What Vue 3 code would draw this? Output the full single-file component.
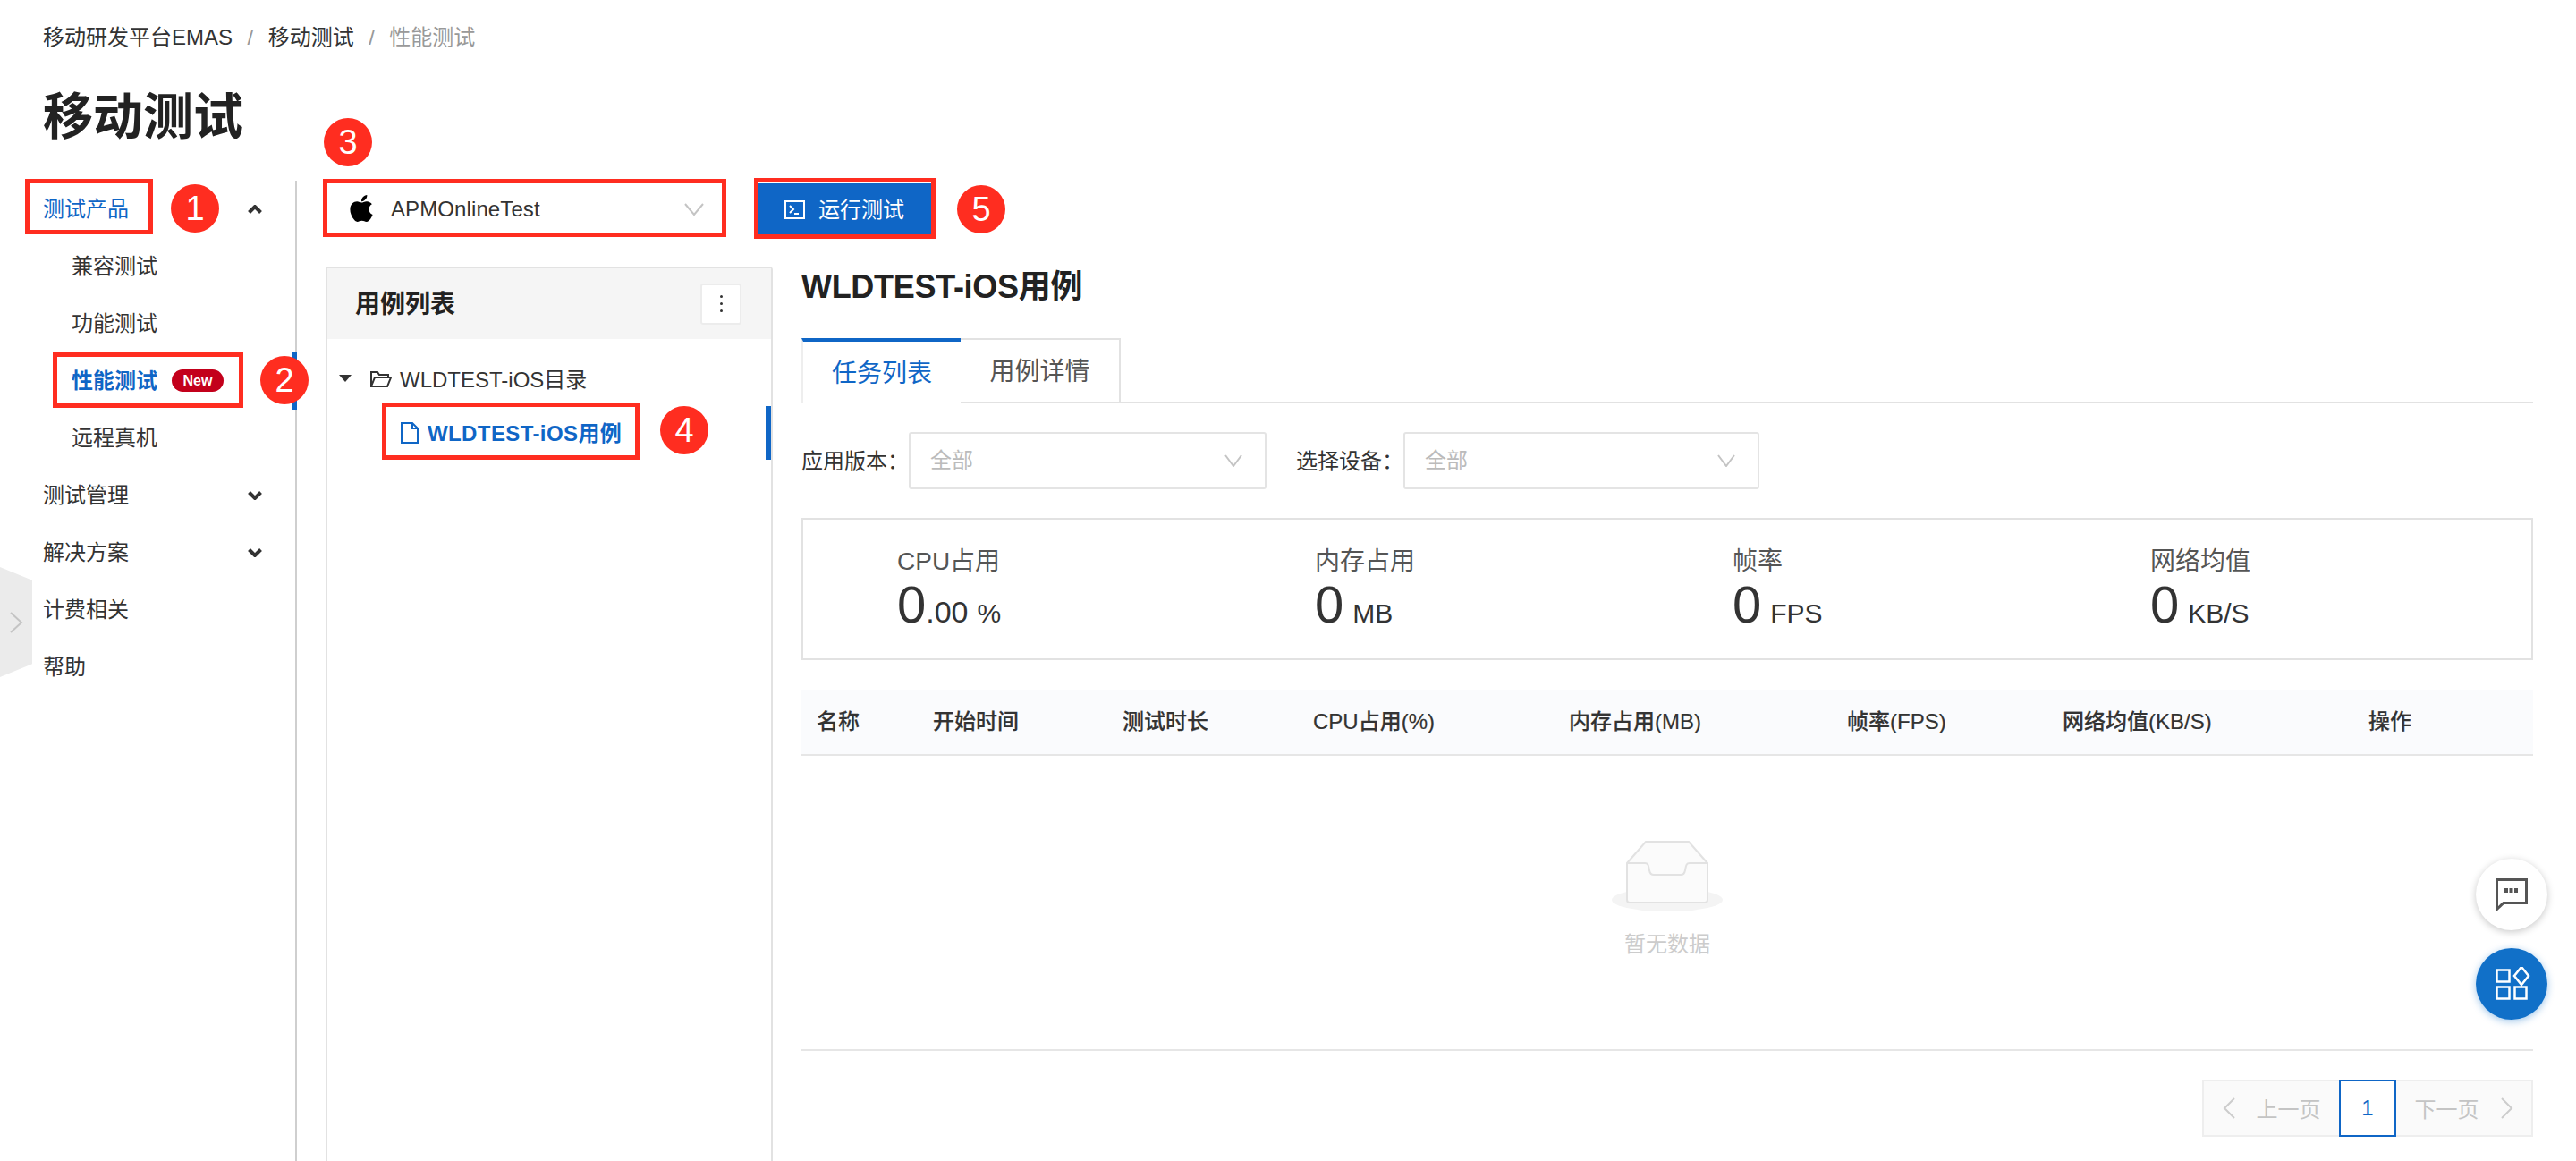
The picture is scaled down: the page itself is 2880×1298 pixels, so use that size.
<script setup>
const subItems = [
  { label: '兼容测试' },
  { label: '功能测试' },
  { label: '性能测试', active: true, badge: 'New' },
  { label: '远程真机' },
]
const lowerItems = [
  { label: '测试管理', arrow: true },
  { label: '解决方案', arrow: true },
  { label: '计费相关' },
  { label: '帮助' },
]
const stats = [
  { title: 'CPU占用', value: '0', frac: '.00', unit: '%' },
  { title: '内存占用', value: '0', unit: 'MB' },
  { title: '帧率', value: '0', unit: 'FPS' },
  { title: '网络均值', value: '0', unit: 'KB/S' },
]
const columns = ['名称', '开始时间', '测试时长', 'CPU占用(%)', '内存占用(MB)', '帧率(FPS)', '网络均值(KB/S)', '操作']
const marks = [1, 2, 3, 4, 5]
const boxes = [1, 2, 3, 4, 5]
</script>

<template>
  <div class="page">
    <header class="head">
      <nav class="crumbs">
        <span>移动研发平台EMAS</span><i>/</i><span>移动测试</span><i>/</i><span class="last">性能测试</span>
      </nav>
      <h1 class="title">移动测试</h1>
    </header>

    <div class="main">
      <aside class="side">
        <div class="row top-active">
          <span>测试产品</span>
          <svg class="caret" width="16" height="10" viewBox="0 0 16 10"><path d="M1.500 8.500 8 2l6.500 6.500" /></svg>
        </div>
        <div v-for="s in subItems" :key="s.label" class="row sub" :class="{ on: s.active }">
          <span>{{ s.label }}</span>
          <em v-if="s.badge" class="badge">{{ s.badge }}</em>
        </div>
        <div v-for="l in lowerItems" :key="l.label" class="row">
          <span>{{ l.label }}</span>
          <svg v-if="l.arrow" class="caret" width="16" height="10" viewBox="0 0 16 10"><path d="M1.500 1.500 8 8l6.500-6.500" /></svg>
        </div>
      </aside>

      <section class="content">
        <div class="toolbar">
          <div class="app-select">
            <svg class="apple" width="28" height="30" viewBox="0 0 384 448"><path transform="translate(0 -32)" d="M318.7 268.7c-.2-36.7 16.4-64.4 50-84.8-18.8-26.9-47.2-41.7-84.7-44.6-35.5-2.8-74.3 20.7-88.5 20.7-15 0-49.4-19.7-76.4-19.7C63.3 141.2 4 184.8 4 273.5q0 39.3 14.4 81.2c12.8 36.7 59 126.7 107.2 125.2 25.2-.6 43-17.9 75.8-17.9 31.8 0 48.3 17.9 76.4 17.9 48.6-.7 90.4-82.5 102.6-119.3-65.2-30.7-61.7-90-61.7-91.9zm-56.6-164.2c27.3-32.4 24.8-61.9 24-72.5-24.1 1.4-52 16.4-67.9 34.9-17.5 19.8-27.8 44.3-25.6 71.9 26.1 2 49.9-11.4 69.5-34.3z" /></svg>
            <span class="app-name">APMOnlineTest</span>
            <svg class="vee" width="22" height="14" viewBox="0 0 22 14"><path d="M1 1l10 12L21 1" /></svg>
          </div>
          <button class="run">
            <svg width="23" height="21" viewBox="0 0 23 21"><path class="term" d="M1 1h21v19H1z" /><path class="term" d="M6 6l4 4-4 4M11 15h5" /></svg>
            <span>运行测试</span>
          </button>
        </div>

        <div class="work">
          <div class="panel">
            <div class="panel-head">
              <strong>用例列表</strong>
              <div class="kebab"><b></b><b></b><b></b></div>
            </div>
            <div class="tree">
              <div class="node">
                <span class="tri"></span>
                <svg width="24" height="18" viewBox="0 0 24 18"><path class="folder" d="M1 17V1h7l2 3h10v3M1 17h18l4-10H5L1 17z" /></svg>
                <span>WLDTEST-iOS目录</span>
              </div>
              <div class="leaf">
                <svg width="20" height="24" viewBox="0 0 20 24"><path class="doc" d="M1 1h12l6 6v16H1zM13 1v6h6" /></svg>
                <span>WLDTEST-iOS用例</span>
              </div>
            </div>
          </div>

          <div class="detail">
            <h2 class="case-title">WLDTEST-iOS用例</h2>
            <div class="tabs">
              <div class="tab active">任务列表</div>
              <div class="tab">用例详情</div>
            </div>
            <div class="filters">
              <label>应用版本：</label>
              <div class="select">
                <span>全部</span>
                <svg class="vee" width="20" height="14" viewBox="0 0 20 14"><path d="M1 1l9 12 9-12" /></svg>
              </div>
              <label class="second">选择设备：</label>
              <div class="select wide">
                <span>全部</span>
                <svg class="vee" width="20" height="14" viewBox="0 0 20 14"><path d="M1 1l9 12 9-12" /></svg>
              </div>
            </div>
            <div class="stats">
              <div v-for="s in stats" :key="s.title" class="stat">
                <div class="stat-title">{{ s.title }}</div>
                <div class="stat-value">
                  <span class="num">{{ s.value }}</span><span v-if="s.frac" class="frac">{{ s.frac }}</span><span class="unit">{{ s.unit }}</span>
                </div>
              </div>
            </div>
            <div class="thead">
              <span v-for="c in columns" :key="c">{{ c }}</span>
            </div>
            <div class="empty">
              <svg width="124" height="80" viewBox="0 0 124 80">
                <ellipse cx="62" cy="66" rx="62" ry="13" fill="#f4f4f4" />
                <path class="tray" d="M17 25 38 1h48l21 24v41a3 3 0 0 1-3 3H20a3 3 0 0 1-3-3z" />
                <path class="tray-line" d="M17 25h20c4 0 4 3 5 8 .5 3 2 5 5 5h30c3 0 4.500-2 5-5 1-5 1-8 5-8h20" />
              </svg>
              <span class="empty-text">暂无数据</span>
            </div>
            <div class="pager">
              <div class="page-btn prev">
                <svg width="14" height="24" viewBox="0 0 14 24"><path d="M13 1 2 12l11 11" /></svg>
                <span>上一页</span>
              </div>
              <div class="page-cur">1</div>
              <div class="page-btn next">
                <span>下一页</span>
                <svg width="14" height="24" viewBox="0 0 14 24"><path d="M1 1l11 11L1 23" /></svg>
              </div>
            </div>
          </div>
        </div>
      </section>
    </div>

    <!-- overlays -->
    <div class="active-bar"></div>
    <div class="flap">
      <svg width="15" height="24" viewBox="0 0 15 24"><path d="M1 1l12 11L1 23" /></svg>
    </div>
    <div v-for="b in boxes" :key="'b' + b" class="anno-box" :class="'box' + b"></div>
    <div v-for="m in marks" :key="'m' + m" class="anno-dot" :class="'dot' + m">{{ m }}</div>
    <div class="floats">
      <div class="float white">
        <svg width="36" height="36" viewBox="0 0 36 36"><path class="chat" d="M1.500 1.500h33v26H9l-7.500 7z" /><path class="chat-dot" d="M10 11h4v5h-4zM15.500 11h4v5h-4zM21 11h4v5h-4z" /></svg>
      </div>
      <div class="float blue">
        <svg width="42" height="38" viewBox="0 0 42 38"><path class="apps" d="M4.500 3.500h14v13h-14zM4.500 22.500h14v13h-14zM24.500 22.500h13v13h-13zM32 0l8 10-8 10-8-10z" /></svg>
      </div>
    </div>
  </div>
</template>

<style>
html, body { margin: 0; background: #fff; }
</style>

<style scoped>
* { box-sizing: border-box; }
.page {
  position: relative;
  width: 2880px;
  height: 1298px;
  overflow: hidden;
  display: flex;
  flex-direction: column;
  background: #fff;
  color: #333;
  font-family: "Liberation Sans", "Noto Sans CJK SC", sans-serif;
  font-size: 24px;
}
.head { padding: 26px 0 43px 48px; }
.crumbs { height: 32px; line-height: 32px; display: flex; }
.crumbs i { font-style: normal; color: #999; margin: 0 16.500px; }
.crumbs .last { color: #999; }
.title { margin: 45px 0 0; font-size: 56px; line-height: 56px; font-weight: 700; color: #222; }
.main { flex: 1; min-height: 0; display: flex; }

.side { width: 332px; border-right: 2px solid #cfcfcf; padding-right: 37px; flex: none; }
.row { height: 64px; padding: 0 0 6px 48px; display: flex; align-items: center; justify-content: space-between; white-space: nowrap; }
.row.sub { padding-left: 80px; justify-content: flex-start; }
.top-active { color: #0f66c6; }
.row.on { color: #0f66c6; font-weight: 700; }
.badge {
  margin: 5px 0 0 16px; width: 58px; height: 25px; border-radius: 13px;
  background: #c3001b; color: #fff; font-size: 16px; font-style: normal; font-weight: 700;
  display: flex; align-items: center; justify-content: center;
}
.caret { margin-top: 6px; }
.caret path { fill: none; stroke: #333; stroke-width: 4; }

.content { flex: 1; min-width: 0; padding: 0 48px 0 32px; display: flex; flex-direction: column; }
.toolbar { height: 96px; padding-bottom: 32px; display: flex; align-items: center; flex: none; }
.app-select { width: 444px; height: 56px; display: flex; align-items: center; padding-left: 26px; flex: none; }
.apple { fill: #000; flex: none; margin-top: -2px; }
.app-name { margin-left: 19px; flex: 1; letter-spacing: 0.1px; }
.vee { flex: none; }
.vee path { fill: none; stroke: #c4c4c4; stroke-width: 2; }
.app-select .vee { margin-right: 21px; }
.run {
  margin-left: 40px; width: 193px; height: 58px; border: 0; border-radius: 0; padding: 0 0 0 29px;
  background: #0f66c6; color: #fff; font: inherit; display: flex; align-items: center; gap: 15px;
}
.run span { padding-bottom: 3px; }
.term { fill: none; stroke: #fff; stroke-width: 2; }

.work { flex: 1; min-height: 0; display: flex; }
.panel { width: 500px; flex: none; border: 2px solid #e2e2e2; border-bottom: 0; border-radius: 4px 4px 0 0; }
.panel-head {
  height: 79px; background: #f5f5f5; display: flex; align-items: center; justify-content: space-between;
  padding: 0 33px 0 31px;
}
.panel-head strong { font-size: 28px; font-weight: 700; color: #222; margin-top: -3px; }
.kebab {
  width: 46px; height: 46px; background: #fff; border: 2px solid #ececec; border-radius: 3px;
  display: flex; flex-direction: column; align-items: center; justify-content: center; gap: 5px;
}
.kebab b { width: 3px; height: 3px; border-radius: 50%; background: #333; }
.tree { padding-top: 15px; }
.node { height: 60px; display: flex; align-items: center; padding: 0 0 3px 13px; }
.tri { width: 0; height: 0; border: 7px solid transparent; border-top: 8px solid #333; border-bottom: 0; margin-right: 21px; }
.node svg { margin-top: 3px; }
.node span:last-child { margin-left: 9px; }
.folder { fill: none; stroke: #333; stroke-width: 2; }
.leaf {
  height: 60px; display: flex; align-items: center; padding: 0 0 4px 82px; gap: 10px;
  border-right: 6px solid #0f66c6; color: #0f66c6; font-weight: 700; letter-spacing: 0.4px;
}
.leaf svg { margin-top: 4px; }
.doc { fill: none; stroke: #0f66c6; stroke-width: 2; }

.detail { flex: 1; min-width: 0; margin-left: 32px; display: flex; flex-direction: column; }
.case-title { margin: 0 0 34px; height: 46px; line-height: 46px; font-size: 36px; letter-spacing: -0.3px; font-weight: 700; color: #222; }
.tabs { height: 73px; display: flex; border-bottom: 2px solid #e2e2e2; flex: none; }
.tab {
  width: 179px; height: 73px; border: 2px solid #e2e2e2; border-left: 0; font-size: 28px; color: #555;
  display: flex; align-items: center; justify-content: center; padding-bottom: 4px;
}
.tab.active {
  width: 178px; color: #0f66c6; border-top: 4px solid #0f66c6; border-left: 2px solid #eee; border-right: 0; border-bottom: 0;
  background: #fff;
}
.filters { margin-top: 32px; height: 64px; display: flex; align-items: center; flex: none; }
.filters label { width: 120px; white-space: nowrap; padding-bottom: 4px; }
.filters .second { margin-left: 33px; }
.select {
  width: 400px; height: 64px; border: 2px solid #e4e4e4; border-radius: 3px; color: #bbb;
  display: flex; align-items: center; justify-content: space-between; padding: 0 25px 0 22px;
}
.select span { padding-bottom: 5px; }
.select.wide { width: 398px; }
.stats {
  margin-top: 32px; height: 159px; border: 2px solid #e2e2e2; display: grid;
  grid-template-columns: repeat(4, 467px); padding: 31px 0 0 105px; flex: none;
}
.stat-title { font-size: 28px; line-height: 32px; color: #555; }
.stat-value { margin-top: 2px; line-height: 60px; height: 60px; white-space: nowrap; color: #333; }
.num { font-size: 58px; }
.frac { font-size: 34px; }
.unit { font-size: 30px; margin-left: 10px; }
.thead {
  margin-top: 33px; height: 74px; background: #fafbfd; border-bottom: 2px solid #e6e6e6; padding: 0 0 5px 17px;
  display: grid; grid-template-columns: 130px 212px 213px 286px 311px 241px 342px 1fr; align-items: center;
  font-weight: 500; white-space: nowrap; flex: none; -webkit-text-stroke: 0.2px #333;
}
.empty {
  height: 330px; border-bottom: 2px solid #e6e6e6; padding-top: 95px; flex: none;
  display: flex; flex-direction: column; align-items: center;
}
.tray { fill: #fbfbfb; stroke: #e2e2e2; stroke-width: 2; }
.tray-line { fill: none; stroke: #e2e2e2; stroke-width: 2; }
.empty-text { margin-top: 20px; line-height: 32px; color: #ccc; }
.pager {
  margin: 32px 0 0 auto; width: 370px; height: 64px; display: flex; flex: none;
  background: #fafafa; border: 2px solid #eee; color: #c4c4c4;
}
.page-btn { flex: 1; display: flex; align-items: center; justify-content: center; gap: 24px; }
.page-btn span { padding-bottom: 2px; }
.page-btn path { fill: none; stroke: #ccc; stroke-width: 2; }
.page-cur {
  width: 64px; height: 64px; margin-top: -2px; border: 2px solid #0f66c6; background: #fff; color: #0f66c6;
  display: flex; align-items: center; justify-content: center; flex: none;
}

.active-bar { position: absolute; left: 326px; top: 394px; width: 6px; height: 64px; background: #0f66c6; }
.flap {
  position: absolute; left: 0; top: 634px; width: 36px; height: 123px; background: #ebebeb;
  clip-path: polygon(0 0, 100% 12%, 100% 88%, 0 100%); display: flex; align-items: center; padding-left: 11px;
}
.flap path { fill: none; stroke: #c4c4c4; stroke-width: 2; }

.anno-box { position: absolute; border: 5px solid #ff2d20; }
.box1 { left: 28px; top: 200px; width: 143px; height: 62px; }
.box2 { left: 59px; top: 394px; width: 213px; height: 62px; }
.box3 { left: 361px; top: 200px; width: 451px; height: 65px; }
.box4 { left: 427px; top: 450px; width: 288px; height: 64px; }
.box5 { left: 843px; top: 199px; width: 203px; height: 68px; }
.anno-dot {
  position: absolute; width: 54px; height: 54px; border-radius: 50%; background: #ff2d20; color: #fff;
  font-size: 38px; display: flex; align-items: center; justify-content: center; line-height: 1;
}
.dot1 { left: 191px; top: 206px; }
.dot2 { left: 291px; top: 398px; }
.dot3 { left: 362px; top: 132px; }
.dot4 { left: 738px; top: 454px; }
.dot5 { left: 1070px; top: 207px; }

.floats { position: absolute; left: 2768px; top: 960px; display: flex; flex-direction: column; gap: 20px; }
.float { width: 80px; height: 80px; border-radius: 50%; display: flex; align-items: center; justify-content: center; }
.float.white { background: #fff; box-shadow: 0 2px 8px rgba(0, 0, 0, 0.22); }
.float.blue { background: #1170c8; box-shadow: 0 2px 8px rgba(17, 112, 200, 0.4); }
.chat { fill: none; stroke: #555; stroke-width: 3; }
.chat-dot { fill: #555; }
.apps { fill: none; stroke: #fff; stroke-width: 2.5; }
</style>
